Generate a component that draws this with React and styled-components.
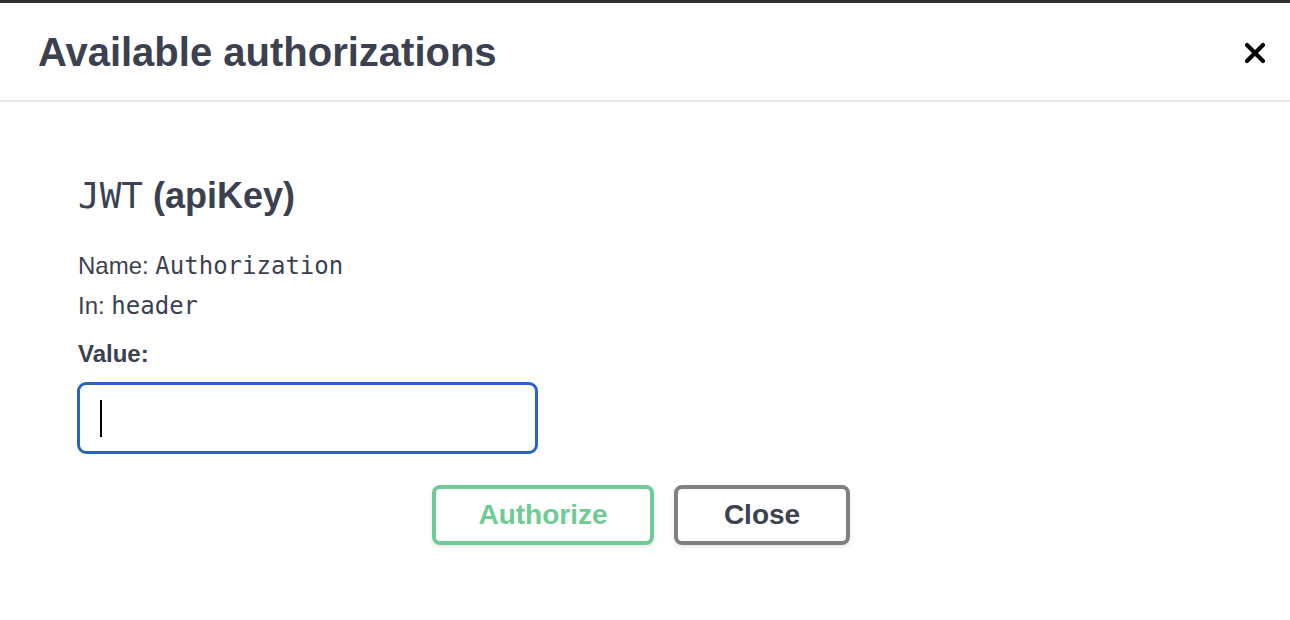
import React from "react";
import styled, { createGlobalStyle } from "styled-components";

const GlobalStyle = createGlobalStyle`
  html, body {
    margin: 0;
    padding: 0;
    background: #ffffff;
  }
  body {
    font-family: "Liberation Sans", Arial, sans-serif;
    color: #3b4151;
  }
`;

const Backdrop = styled.div`
  height: 3px;
  background: #2f2f2f;
`;

const Modal = styled.div`
  background: #ffffff;
  width: 1290px;
  height: 617px;
`;

const Header = styled.div`
  display: flex;
  align-items: center;
  justify-content: space-between;
  height: 97px;
  padding: 2px 24px 0 38px;
  box-sizing: border-box;
  height: 99px;
  border-bottom: 2px solid #e8e8e8;
`;

const Title = styled.h3`
  margin: 0;
  font-size: 40px;
  font-weight: 700;
  color: #3b4151;
`;

const CloseIcon = styled.button`
  display: flex;
  padding: 0;
  border: none;
  background: none;
  cursor: pointer;
`;

const Content = styled.div`
  padding: 72px 0 0 78px;
`;

const SchemeTitle = styled.h4`
  margin: 0 0 28px;
  font-size: 36px;
  line-height: 44px;
  font-weight: 700;
  color: #3b4151;
`;

const Code = styled.code`
  font-family: "DejaVu Sans Mono", monospace;
  font-weight: 400;
  font-size: ${(p) => p.size || "24px"};
  color: #3b4151;
`;

const Line = styled.p`
  margin: 0;
  font-size: 24px;
  line-height: 40px;
`;

const Label = styled.label`
  display: block;
  margin-top: 8px;
  font-size: 24px;
  line-height: 40px;
  font-weight: 700;
`;

const InputBox = styled.div`
  box-sizing: border-box;
  display: flex;
  align-items: center;
  margin: 8px 0 0 -1px;
  width: 461px;
  height: 72px;
  padding-left: 20px;
  border: 3px solid #2a62c9;
  border-radius: 9px;
  background: #ffffff;
`;

const Caret = styled.span`
  display: block;
  width: 2px;
  height: 37px;
  background: #000000;
`;

const ButtonRow = styled.div`
  display: flex;
  justify-content: center;
  gap: 20px;
  margin-top: 31px;
  padding-right: 8px;
`;

const Button = styled.button`
  box-sizing: border-box;
  height: 60px;
  width: ${(p) => p.width};
  border: 4px solid ${(p) => p.border};
  border-radius: 8px;
  background: transparent;
  color: ${(p) => p.color};
  font-family: "Liberation Sans", Arial, sans-serif;
  font-size: 28px;
  font-weight: 700;
  box-shadow: 0 2px 4px rgba(0, 0, 0, 0.1);
  cursor: pointer;
`;

export default function App() {
  return (
    <>
      <GlobalStyle />
      <Backdrop />
      <Modal>
        <Header>
          <Title>Available authorizations</Title>
          <CloseIcon aria-label="Close">
            <svg width="22" height="22" viewBox="0 0 22 22">
              <path
                d="M3 3 L19 19 M19 3 L3 19"
                stroke="#000"
                strokeWidth="4.2"
                strokeLinecap="round"
                fill="none"
              />
            </svg>
          </CloseIcon>
        </Header>
        <Content>
          <SchemeTitle>
            <Code size="36px">JWT</Code> (apiKey)
          </SchemeTitle>
          <Line>
            Name: <Code>Authorization</Code>
          </Line>
          <Line>
            In: <Code>header</Code>
          </Line>
          <Label>Value:</Label>
          <InputBox>
            <Caret />
          </InputBox>
        </Content>
        <ButtonRow>
          <Button width="222px" border="#6fcb94" color="#6fcb94">
            Authorize
          </Button>
          <Button width="176px" border="#808080" color="#3b4151">
            Close
          </Button>
        </ButtonRow>
      </Modal>
    </>
  );
}
